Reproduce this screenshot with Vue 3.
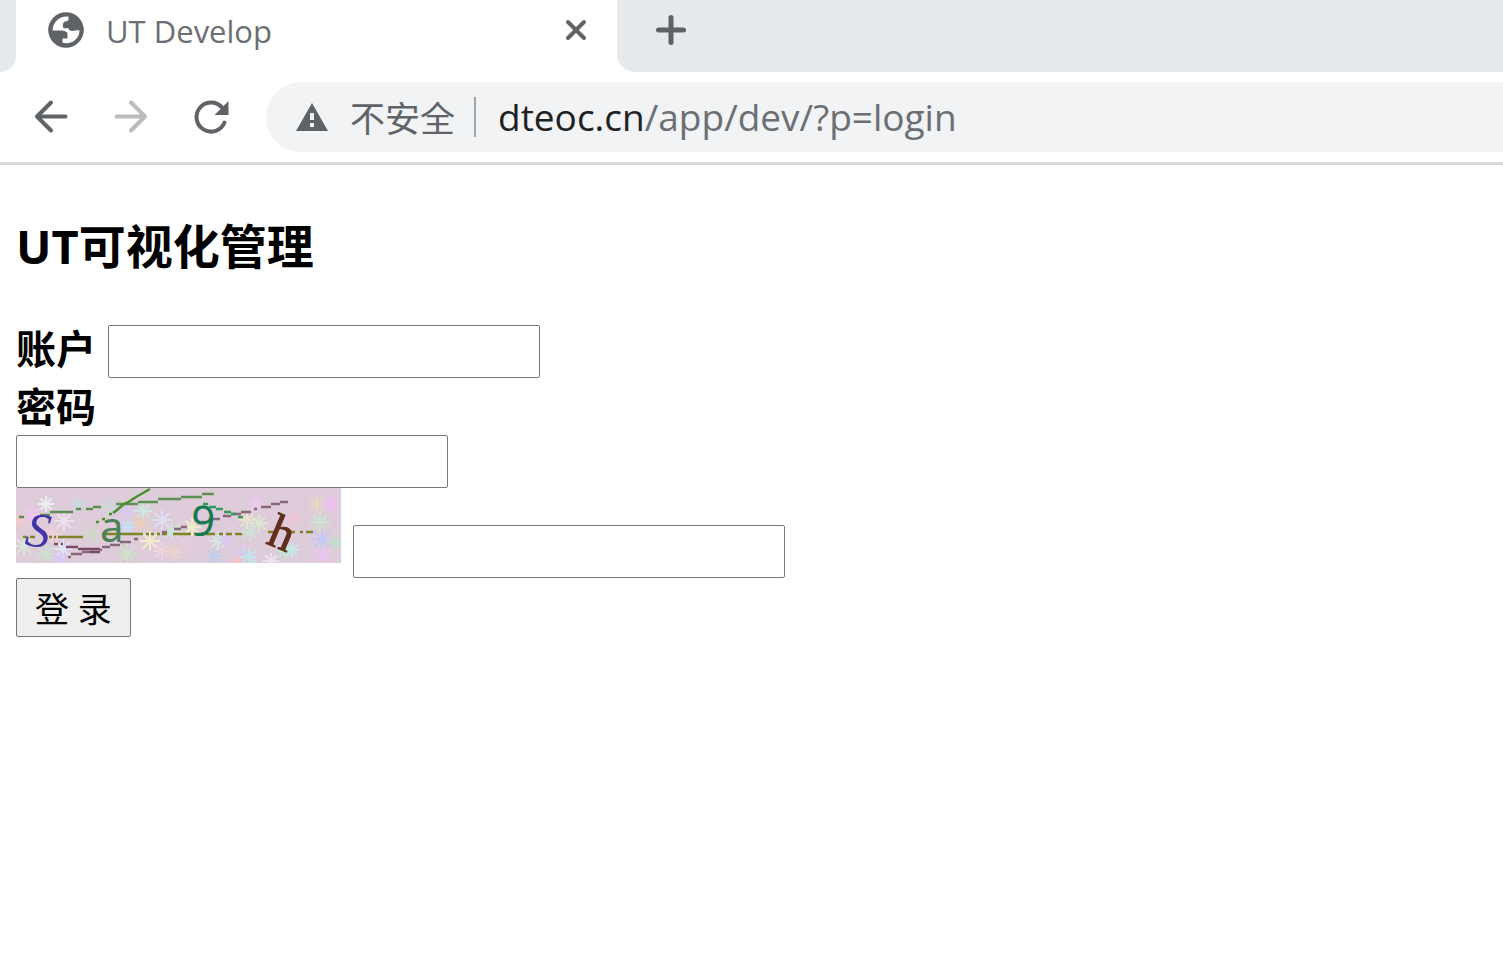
<script setup>
import { ref } from 'vue'

const account = ref('')
const password = ref('')
const captcha = ref('')

const flakes = [
  [30, 16, 8, '#eef8f4'], [62, 16, 7, '#c5dedd'], [93, 18, 9, '#cadbd9'], [16, 27, 9, '#f3c6f8'],
  [48, 33, 10, '#f0e5f2'], [5, 33, 8, '#f6c9cd'], [111, 24, 10, '#d5c9f5'], [127, 23, 9, '#c8efdf'],
  [146, 32, 10, '#dce4f4'], [124, 35, 10, '#efd0b4'], [112, 39, 8, '#c5e2fa'], [75, 46, 10, '#cadbc9'],
  [36, 46, 9, '#f7d2db'], [8, 58, 10, '#d9eed9'], [30, 66, 10, '#cce7d0'], [47, 61, 10, '#e1e7fb'],
  [44, 71, 8, '#dacaf8'], [111, 66, 11, '#cae8c7'], [134, 53, 10, '#f3f3ca'], [146, 63, 9, '#f5d4e0'],
  [156, 43, 9, '#cde7df'], [158, 64, 9, '#f0d6c8'], [169, 55, 10, '#e9cce2'], [176, 39, 9, '#f3f3c9'],
  [202, 53, 9, '#d3eee0'], [210, 52, 8, '#d9c8f3'], [198, 68, 8, '#b9cdf2'], [225, 64, 9, '#d6c9ec'],
  [221, 74, 6, '#f7c5bf'], [233, 69, 9, '#bde9ef'], [240, 16, 8, '#edc8f5'], [231, 32, 9, '#ece6ce'],
  [243, 35, 9, '#dcebcd'], [234, 44, 10, '#c8e6d7'], [255, 73, 8, '#f2e4f6'], [277, 31, 8, '#f4c3d0'],
  [269, 63, 9, '#bce8d1'], [276, 62, 8, '#c0edf0'], [301, 16, 9, '#ead8c4'], [314, 16, 9, '#efbff8'],
  [304, 34, 10, '#c8eccc'], [306, 51, 11, '#bfc9f6'], [320, 55, 9, '#bfe0c9'], [307, 68, 9, '#edc4f7']
]
</script>

<template>
  <div class="browser">
    <header>
      <div class="tabstrip">
        <div class="strip-start"></div>
        <div class="tab">
          <svg class="globe" viewBox="0 0 36 36" aria-hidden="true">
            <circle cx="18" cy="18" r="17.8" fill="#5f6368" />
            <path d="M20.500 4.600C12 3.500 4.800 9.500 4.600 18.500H12c5 0 7.500 1 7.500 4v4h-5v4.300C23.500 33 31.500 27 31.500 18.500c-3-.5-4.500.5-7 .5-2.500 0-4-1.300-4-2.800h-5c-1-2.200-1-5.700 1.500-6.700 2-.5 3.500-.5 3.500-2.500z" fill="#fff" />
          </svg>
          <span class="tab-title">UT Develop</span>
          <button class="icon-button" type="button" aria-label="Close tab">
            <svg width="20" height="20" viewBox="0 0 20 20"><path d="M2 2l16 16M18 2L2 18" /></svg>
          </button>
        </div>
        <div class="strip-rest">
          <button class="icon-button" type="button" aria-label="New tab">
            <svg class="plus" width="30" height="30" viewBox="0 0 30 30"><path d="M15 2.500v25M2.500 15h25" /></svg>
          </button>
        </div>
      </div>
      <div class="toolbar">
        <nav class="nav">
          <button class="icon-button" type="button" aria-label="Back">
            <svg width="34" height="34" viewBox="0 0 34 34"><path d="M31.500 16.500H3M17 2.500l-14 14 14 14" /></svg>
          </button>
          <button class="icon-button forward" type="button" aria-label="Forward">
            <svg width="34" height="34" viewBox="0 0 34 34"><path d="M2.500 16.500H31M17 2.500l14 14-14 14" /></svg>
          </button>
          <button class="icon-button" type="button" aria-label="Reload">
            <svg width="34" height="34" viewBox="0 0 34 34">
              <path d="M30.500 22.500A14.500 14.500 0 1 1 27.500 7" />
              <path class="solid" d="M34.500 1v14H20.500z" />
            </svg>
          </button>
        </nav>
        <div class="omnibox">
          <svg class="warning" viewBox="0 0 32 28" aria-hidden="true">
            <path d="M16 0l16 28H0z" fill="#5f6368" />
            <path d="M14 10h4v7h-4zM14 20h4v4h-4z" fill="#f1f3f4" />
          </svg>
          <span class="insecure">不安全</span>
          <span class="divider"></span>
          <div class="url" role="textbox" aria-label="Address" contenteditable="true" spellcheck="false"><span class="host">dteoc.cn</span>/app/dev/?p=login</div>
        </div>
      </div>
    </header>

    <main>
      <h2>UT可视化管理</h2>
      <form @submit.prevent>
        <div class="row">
          <label for="account">账户</label>
          <input id="account" v-model="account" type="text" />
        </div>
        <div class="stack">
          <label for="password">密码</label>
          <input id="password" v-model="password" type="password" />
        </div>
        <div class="captcha-row">
          <svg class="captcha" viewBox="0 0 325 75" role="img" aria-label="Captcha">
            <rect width="325" height="75" fill="#dfccda" />
            <g v-for="(f, i) in flakes" :key="i" :transform="`translate(${f[0]} ${f[1]})`" :stroke="f[3]" stroke-width="2" opacity="0.85">
              <path :d="`M${-f[2]} 0H${f[2]}M0 ${-f[2]}V${f[2]}M${-f[2] * 0.7} ${-f[2] * 0.7}L${f[2] * 0.7} ${f[2] * 0.7}M${-f[2] * 0.7} ${f[2] * 0.7}L${f[2] * 0.7} ${-f[2] * 0.7}`" />
            </g>
            <g fill="none" stroke-width="2.500">
              <path stroke="#5b9150" d="M3 29h5M24 27h10M34 24h23M60 21h5M70 21h7M77 19h8M100 16h22M122 14h20M142 11h23M165 9h21M186 6h12" />
              <path stroke="#46912c" d="M80 34h3M86 31h3M93 26h3M97 25l4-3M101 22l7-6M108 16l6-3M114 13l6-4M120 9l7-4M127 5l7-4" />
              <path stroke="#7c8425" d="M7 49h4M14 49h5M33 49h3M38 49h2M42 49h25M86 46h41M130 46h3M135 46h3M141 46h3M146 46h5M157 46h18M181 46h7M190 46h9M203 46h4M210 46h6M219 46h7M252 44h10M275 44h4M284 44h3M290 44h7" />
              <path stroke="#7b4968" d="M38 56h4M45 56h2M50 59h12M62 61h22M74 64h10" />
              <path stroke="#856775" d="M52 69h3M55 66h11M66 64h8M84 62h2M86 59h8M94 57h10M104 54h11M118 51h4M146 44h5M158 41h7M165 39h6M185 34h11M196 31h8M207 28h8M215 26h10M225 24h10M238 21h3M245 19h10M255 16h9M264 14h8" />
              <path stroke="#2e9d5c" d="M187 16h5M193 19h7M200 21h7M208 24h7M215 26h5M222 29h5" />
            </g>
            <text transform="translate(8 57) rotate(8)" font-size="49" font-style="italic" font-family="Liberation Serif, serif" fill="#4035aa">S</text>
            <text x="84" y="54" font-size="42" font-family="Noto Sans, sans-serif" fill="#4c8259">a</text>
            <text transform="translate(174 47) rotate(4)" font-size="42" font-family="Noto Sans, sans-serif" fill="#157a50">9</text>
            <text transform="translate(249 55) rotate(23)" font-size="48" font-family="Liberation Serif, serif" fill="#60301f" stroke="#60301f">h</text>
          </svg>
          <input v-model="captcha" type="text" aria-label="验证码" />
        </div>
        <button class="submit" type="submit">登 录</button>
      </form>
    </main>
  </div>
</template>

<style>
body {
  margin: 0;
  background: #fff;
}
</style>

<style scoped>
.browser {
  font-family: "Open Sans", "Noto Sans CJK SC", sans-serif;
  color: #000;
}

.tabstrip {
  display: flex;
  height: 72px;
}

.strip-start {
  width: 16px;
  background: #e6eaed;
  border-bottom-right-radius: 16px;
}

.tab {
  box-sizing: border-box;
  display: flex;
  align-items: center;
  width: 601px;
  padding: 0 31px 12px 32px;
}

.globe {
  width: 36px;
  height: 36px;
  margin-right: 22px;
}

.tab-title {
  flex: 1;
  padding-top: 2px;
  font-size: 31px;
  line-height: 40px;
  color: #6b6f73;
}

.icon-button {
  display: flex;
  padding: 0;
  border: 0;
  background: none;
}

.icon-button svg {
  overflow: visible;
  fill: none;
  stroke: #5f6368;
  stroke-width: 4;
  stroke-linecap: round;
  stroke-linejoin: round;
}

.icon-button .plus {
  stroke-width: 5;
}

.icon-button .solid {
  fill: #5f6368;
  stroke: none;
}

.forward svg {
  stroke: #babcbe;
}

.strip-rest {
  flex: 1;
  display: flex;
  align-items: center;
  padding: 0 39px 12px;
  background: #e6eaed;
  border-bottom-left-radius: 18px;
}

.toolbar {
  display: flex;
  align-items: center;
  padding: 10px 0 10px 34px;
  border-bottom: 3px solid #dadbdd;
}

.nav {
  display: flex;
  gap: 46px;
  margin-right: 38px;
}

.omnibox {
  flex: 1;
  display: flex;
  align-items: center;
  height: 70px;
  padding-left: 30px;
  background: #f1f3f4;
  border-radius: 35px 0 0 35px;
  font-size: 37px;
  line-height: 48px;
  color: #6b6f73;
}

.warning {
  width: 32px;
  height: 28px;
  margin-right: 22px;
}

.insecure {
  padding-top: 4px;
  font-size: 35px;
  color: #5f6368;
}

.divider {
  width: 2px;
  height: 40px;
  margin: 0 22px 0 19px;
  background: #a3a6a9;
}

.url {
  outline: none;
  white-space: nowrap;
}

.host {
  color: #202124;
}

main {
  padding: 49px 16px 16px;
}

h2 {
  margin: 0 0 47px;
  font-size: 47px;
  line-height: 64px;
}

form {
  display: flex;
  flex-direction: column;
  align-items: flex-start;
}

label {
  font-size: 40px;
  font-weight: bold;
  line-height: 57px;
}

.row,
.captcha-row {
  display: flex;
  gap: 12px;
}

.row label {
  line-height: 48px;
}

.stack {
  display: flex;
  flex-direction: column;
}

input {
  box-sizing: border-box;
  width: 432px;
  height: 53px;
  margin: 0;
  padding: 2px 6px;
  border: 1px solid #767676;
  border-radius: 2px;
  background: #fff;
  font: inherit;
  font-size: 32px;
}

.captcha-row input {
  align-self: flex-end;
}

.captcha-row {
  height: 90px;
}

.captcha {
  width: 325px;
  height: 75px;
}

.submit {
  height: 59px;
  padding: 4px 18px 0;
  border: 1px solid #767676;
  border-radius: 2px;
  background: #efefef;
  color: #000;
  font-family: inherit;
  font-size: 34px;
  line-height: 53px;
}
</style>
